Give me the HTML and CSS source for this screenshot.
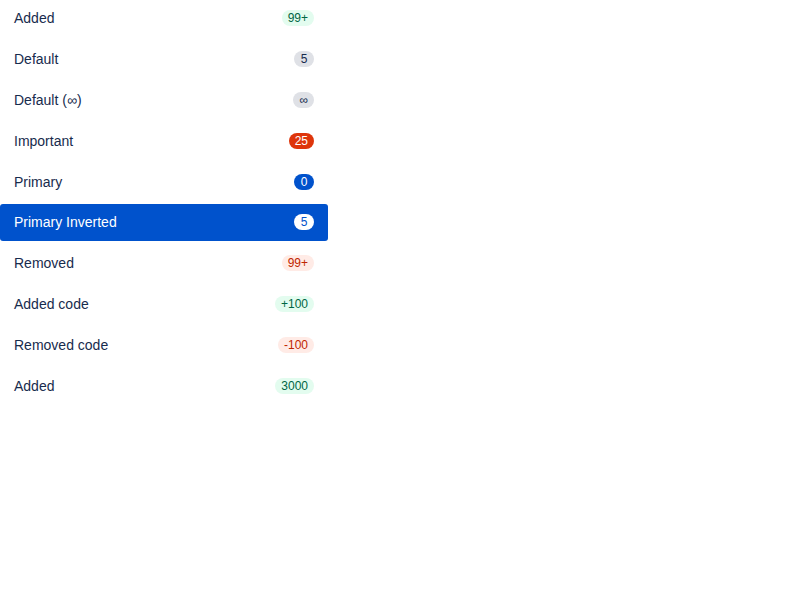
FILE: index.html
```html
<!DOCTYPE html>
<html>
<head>
<meta charset="utf-8">
<link rel="stylesheet" href="styles.css">
</head>
<body>
<div class="list">
  <div class="row"><span class="label">Added</span><span class="badge added">99+</span></div>
  <div class="row"><span class="label">Default</span><span class="badge default">5</span></div>
  <div class="row"><span class="label">Default (∞)</span><span class="badge default">∞</span></div>
  <div class="row"><span class="label">Important</span><span class="badge important">25</span></div>
  <div class="row"><span class="label">Primary</span><span class="badge primary">0</span></div>
  <div class="row selected"><span class="label">Primary Inverted</span><span class="badge inverted">5</span></div>
  <div class="row"><span class="label">Removed</span><span class="badge removed">99+</span></div>
  <div class="row"><span class="label">Added code</span><span class="badge added">+100</span></div>
  <div class="row"><span class="label">Removed code</span><span class="badge removed">-100</span></div>
  <div class="row"><span class="label">Added</span><span class="badge added">3000</span></div>
</div>
</body>
</html>
```
FILE: styles.css
```css
html, body {
  margin: 0;
  padding: 0;
  background: #fff;
}
body {
  font-family: "Liberation Sans", Arial, sans-serif;
  color: #172B4D;
}
.list {
  width: 328px;
  display: flex;
  flex-direction: column;
  gap: 4px;
}
.row {
  height: 36.8px;
  box-sizing: border-box;
  padding: 0 14px;
  display: flex;
  align-items: center;
  justify-content: space-between;
  font-size: 14px;
  border-radius: 3px;
}
.row.selected {
  background: #0052CC;
  color: #fff;
}
.badge {
  display: inline-block;
  height: 16px;
  line-height: 16px;
  min-width: 8px;
  padding: 0 6px;
  border-radius: 8px;
  font-size: 12px;
  text-align: center;
}
.added { background: #E3FCEF; color: #006644; }
.default { background: #DFE1E6; color: #172B4D; }
.important { background: #DE350B; color: #fff; }
.primary { background: #0052CC; color: #fff; }
.inverted { background: #fff; color: #0052CC; }
.removed { background: #FFEBE6; color: #BF2600; }
```
